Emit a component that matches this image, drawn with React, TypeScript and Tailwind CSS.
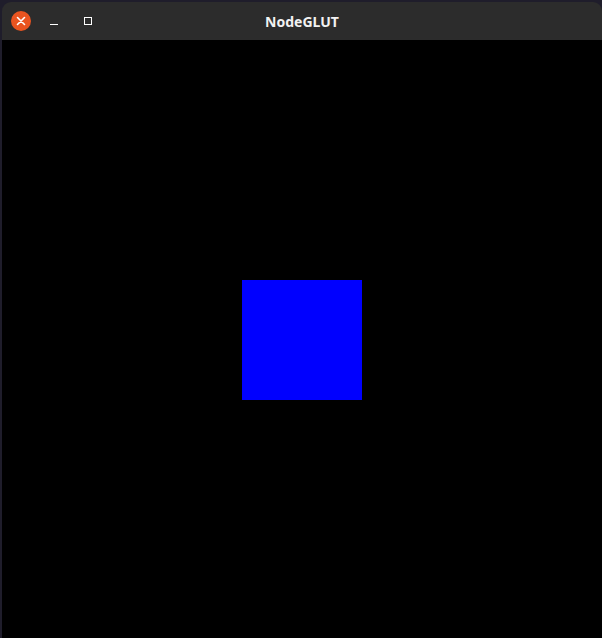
export default function App() {
  return (
    <div className="w-[602px] h-[638px] bg-[#1f1d2b] pl-[2px] pt-[2px] flex">
      <div className="flex-1 flex flex-col rounded-t-[9px] overflow-hidden">
        {/* Title bar */}
        <div className="relative h-[38px] bg-[#2c2c2c] flex items-center shrink-0">
          <div className="flex items-center ml-[9px]">
            <div className="w-[20px] h-[20px] rounded-full bg-[#e95420] flex items-center justify-center">
              <svg width="10" height="10" viewBox="0 0 10 10">
                <path d="M1.5 1.5 L8.5 8.5 M8.5 1.5 L1.5 8.5" stroke="#fff" strokeWidth="1.6" strokeLinecap="round" />
              </svg>
            </div>
            <div className="w-[34px] flex justify-center ml-[6px]">
              <div className="w-[8px] h-[1px] bg-white mt-[7px]" />
            </div>
            <div className="w-[34px] flex justify-center">
              <div className="w-[8px] h-[8px] border border-white" />
            </div>
          </div>
          <div className="absolute inset-0 flex items-center justify-center pointer-events-none">
            <span className="font-['Noto_Sans',sans-serif] font-bold text-[14px] text-[#f2f2f2]">
              NodeGLUT
            </span>
          </div>
        </div>
        {/* GL canvas */}
        <div className="flex-1 bg-black pt-[2px] flex items-center justify-center">
          <div className="w-[120px] h-[120px] bg-[#0000ff]" />
        </div>
      </div>
    </div>
  );
}
